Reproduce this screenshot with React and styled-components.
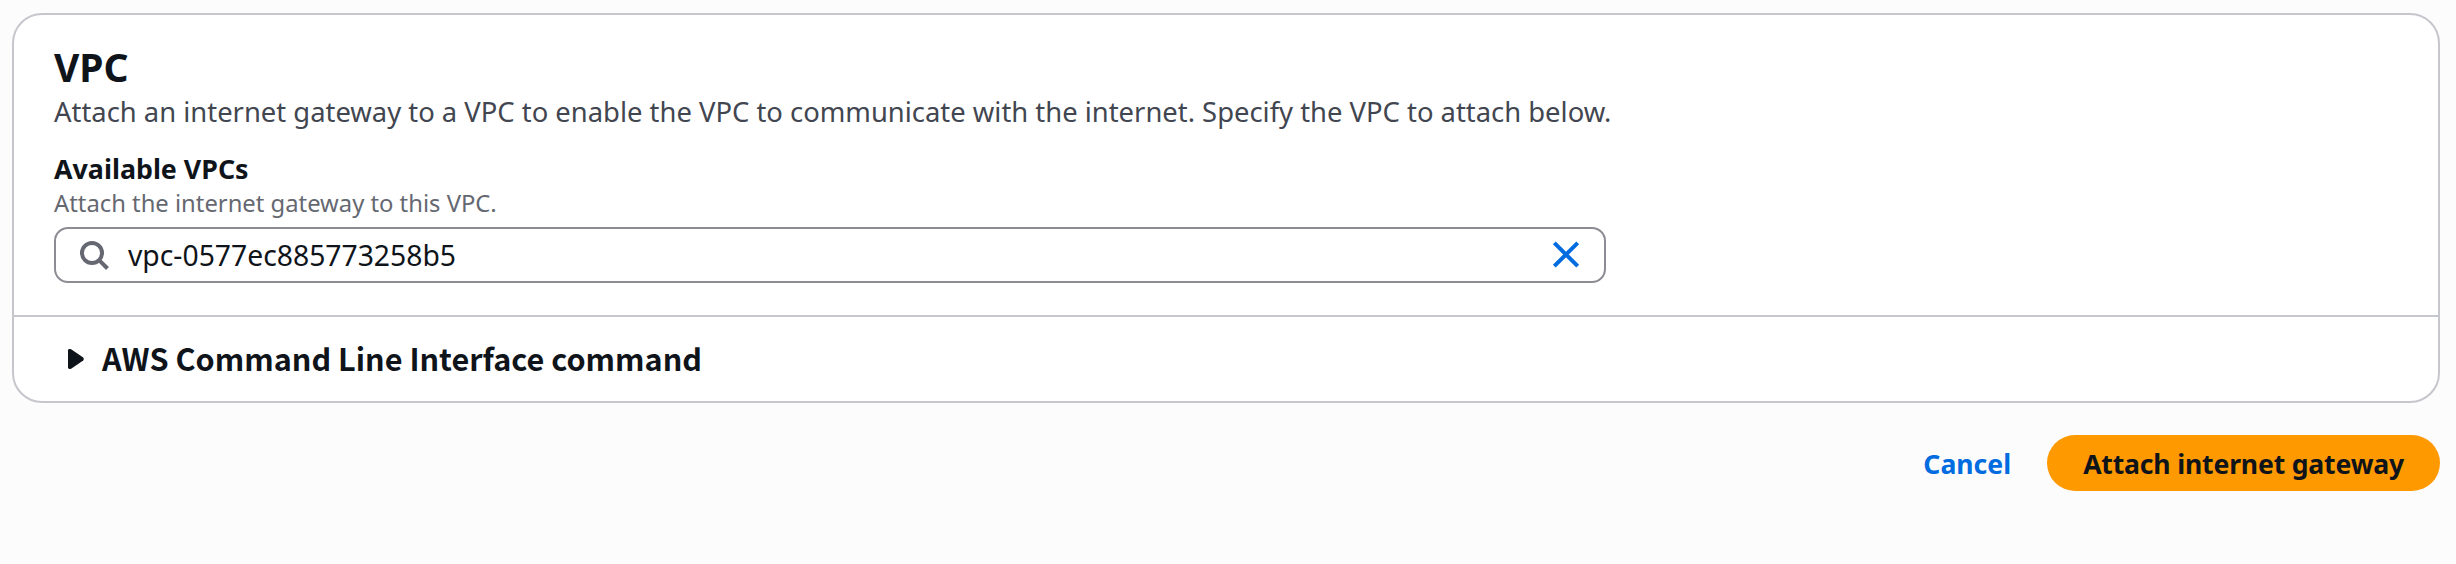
import React from 'react';
import styled, { createGlobalStyle } from 'styled-components';

const GlobalStyle = createGlobalStyle`
  * { box-sizing: border-box; }
  body {
    margin: 0;
    background: #fcfcfd;
    color: #0f141a;
    font-family: 'Noto Sans', sans-serif;
  }
`;

const Page = styled.main`
  padding: 13px 16px 0 12px;
`;

const Card = styled.section`
  border: 2px solid #c6c6cd;
  border-radius: 30px;
  background: #fff;
  overflow: hidden;
`;

const CardBody = styled.div`
  padding: 28px 40px 32px;
`;

const Title = styled.h2`
  margin: 0 0 1px;
  font-size: 39px;
  line-height: 48px;
  font-weight: 700;
`;

const Description = styled.p`
  margin: 0 0 17px;
  color: #424650;
  font-size: 27.4px;
  line-height: 40px;
`;

const Label = styled.label`
  display: block;
  font-size: 26.8px;
  line-height: 39px;
  font-weight: 700;
`;

const Hint = styled.p`
  margin: -1px 0 8px;
  color: #656871;
  font-size: 23.8px;
  line-height: 32px;
`;

const SearchField = styled.div`
  display: flex;
  align-items: center;
  width: 1552px;
  height: 56px;
  padding: 0 24px 0 22px;
  border: 2px solid #8c8c94;
  border-radius: 14px;
`;

const SearchValue = styled.span`
  flex: 1;
  margin-left: 18px;
  font-size: 28.3px;
  line-height: 40px;
`;

const Icon = styled.svg`
  display: block;
  flex: none;
  overflow: visible;
`;

const IconButton = styled.button`
  padding: 0;
  border: 0;
  background: none;
  color: #006ce0;
`;

const ExpandHeader = styled.div`
  display: flex;
  align-items: center;
  height: 86px;
  padding-left: 54px;
  border-top: 2px solid #c6c6cd;
`;

const ExpandTitle = styled.h3`
  margin: 0 0 0 18px;
  padding-bottom: 2px;
  font-family: 'Noto Sans CJK SC', 'Noto Sans', sans-serif;
  font-size: 30.6px;
  line-height: 40px;
  font-weight: 700;
`;

const Actions = styled.div`
  display: flex;
  justify-content: flex-end;
  margin-top: 32px;
`;

const Button = styled.button`
  height: 56px;
  padding: 2px 36px 0;
  border: 0;
  border-radius: 28px;
  background: ${(p) => (p.$primary ? '#ff9900' : 'transparent')};
  color: ${(p) => (p.$primary ? '#0f141a' : '#006ce0')};
  font: 700 26.6px/40px 'Noto Sans', sans-serif;
  letter-spacing: ${(p) => (p.$primary ? '-0.18px' : '0')};
`;

export default function App() {
  return (
    <>
      <GlobalStyle />
      <Page>
        <Card>
          <CardBody>
            <Title>VPC</Title>
            <Description>
              Attach an internet gateway to a VPC to enable the VPC to communicate with the internet. Specify the VPC to attach below.
            </Description>
            <Label>Available VPCs</Label>
            <Hint>Attach the internet gateway to this VPC.</Hint>
            <SearchField>
              <Icon width="32" height="32" viewBox="0 0 32 32" fill="none" stroke="#656871" strokeWidth="4">
                <circle cx="14" cy="14" r="10" />
                <path d="M20.8 20.8L29.5 29.5" />
              </Icon>
              <SearchValue>vpc-0577ec885773258b5</SearchValue>
              <IconButton aria-label="Clear">
                <Icon width="28" height="28" viewBox="0 0 28 28" fill="none" stroke="currentColor" strokeWidth="4">
                  <path d="M2.3 1.8L25.7 25.2M25.7 1.8L2.3 25.2" />
                </Icon>
              </IconButton>
            </SearchField>
          </CardBody>
          <ExpandHeader>
            <Icon width="16" height="20" viewBox="0 0 16 20" fill="#0f141a">
              <path d="M0 1.4Q0 0 1.4 0H2.2Q2.9 0 3.5 .4L15.2 8.6Q16.6 10 15.2 11.4L3.5 19.6Q2.9 20 2.2 20H1.4Q0 20 0 18.6Z" />
            </Icon>
            <ExpandTitle>AWS Command Line Interface command</ExpandTitle>
          </ExpandHeader>
        </Card>
        <Actions>
          <Button>Cancel</Button>
          <Button $primary>Attach internet gateway</Button>
        </Actions>
      </Page>
    </>
  );
}
